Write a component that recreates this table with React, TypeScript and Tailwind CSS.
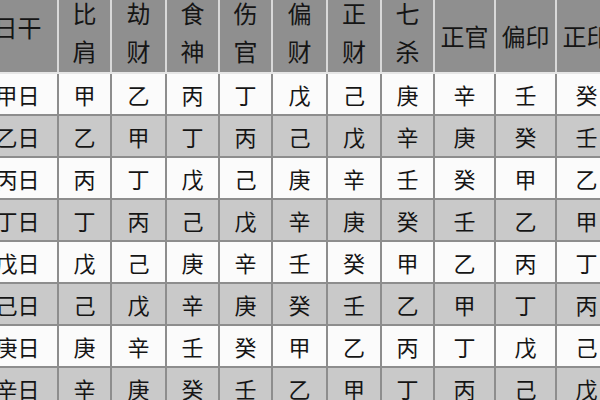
const heads: { label: string; two: boolean }[] = [
  { label: '日干', two: false },
  { label: '比肩', two: true },
  { label: '劫财', two: true },
  { label: '食神', two: true },
  { label: '伤官', two: true },
  { label: '偏财', two: true },
  { label: '正财', two: true },
  { label: '七杀', two: true },
  { label: '正官', two: false },
  { label: '偏印', two: false },
  { label: '正印', two: false },
];

const rows = [
  ['甲日', '甲', '乙', '丙', '丁', '戊', '己', '庚', '辛', '壬', '癸'],
  ['乙日', '乙', '甲', '丁', '丙', '己', '戊', '辛', '庚', '癸', '壬'],
  ['丙日', '丙', '丁', '戊', '己', '庚', '辛', '壬', '癸', '甲', '乙'],
  ['丁日', '丁', '丙', '己', '戊', '辛', '庚', '癸', '壬', '乙', '甲'],
  ['戊日', '戊', '己', '庚', '辛', '壬', '癸', '甲', '乙', '丙', '丁'],
  ['己日', '己', '戊', '辛', '庚', '癸', '壬', '乙', '甲', '丁', '丙'],
  ['庚日', '庚', '辛', '壬', '癸', '甲', '乙', '丙', '丁', '戊', '己'],
  ['辛日', '辛', '庚', '癸', '壬', '乙', '甲', '丁', '丙', '己', '戊'],
];

const cols = 'grid grid-cols-[81px_53px_55px_53px_53px_55px_54px_53px_61px_61px_61px]';

export default function App() {
  return (
    <div
      className="w-[600px] h-[400px] overflow-hidden bg-white text-[#151515]"
      style={{ fontFamily: '"Noto Sans CJK SC", "Noto Sans", sans-serif' }}
    >
      <div className="ml-[-22px] w-[640px]">
        {/* header */}
        <div className={`${cols} h-[74px] bg-[#8f8f8f] border-b-2 border-[#e6e6e6]`}>
          {heads.map((h, i) => (
            <div
              key={i}
              className="flex justify-center items-start border-r-2 border-[#d9d9d9] overflow-hidden text-[24px]"
            >
              {h.two ? (
                <div className="flex flex-col items-center leading-[38px] mt-[-6px]">
                  <span>{h.label[0]}</span>
                  <span>{h.label[1]}</span>
                </div>
              ) : (
                <span className={`leading-[24px] ${i === 0 ? 'mt-[15px]' : 'mt-[24px]'}`}>{h.label}</span>
              )}
            </div>
          ))}
        </div>
        {/* body */}
        {rows.map((r, ri) => (
          <div
            key={ri}
            className={`${cols} ${ri === 0 ? 'h-[42px]' : 'h-[42px]'} border-b-2 border-[#8d8d8d] ${
              ri % 2 === 0 ? 'bg-[#fbfbfb]' : 'bg-[#c9c9c9]'
            }`}
          >
            {r.map((c, ci) => (
              <div
                key={ci}
                className="flex items-center justify-center border-r-2 border-[#8d8d8d] text-[22px] leading-none"
              >
                {c}
              </div>
            ))}
          </div>
        ))}
      </div>
    </div>
  );
}
